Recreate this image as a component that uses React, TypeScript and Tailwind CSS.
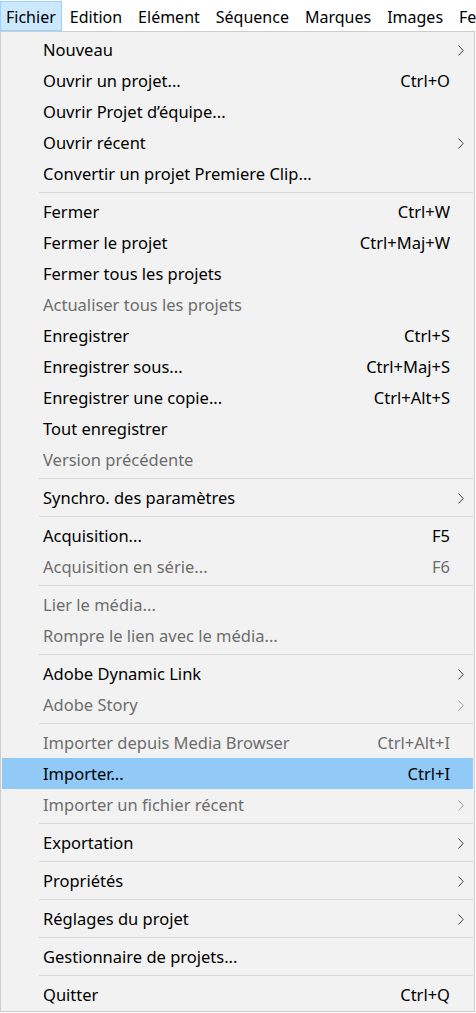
import React from "react";

type Item =
  | { sep: true }
  | { label: string; shortcut?: string; sub?: boolean; disabled?: boolean; active?: boolean };

const MENUS = ["Fichier", "Edition", "Elément", "Séquence", "Marques", "Images", "Fenêtre"];

const ITEMS: Item[] = [
  { label: "Nouveau", sub: true },
  { label: "Ouvrir un projet...", shortcut: "Ctrl+O" },
  { label: "Ouvrir Projet d’équipe..." },
  { label: "Ouvrir récent", sub: true },
  { label: "Convertir un projet Premiere Clip..." },
  { sep: true },
  { label: "Fermer", shortcut: "Ctrl+W" },
  { label: "Fermer le projet", shortcut: "Ctrl+Maj+W" },
  { label: "Fermer tous les projets" },
  { label: "Actualiser tous les projets", disabled: true },
  { label: "Enregistrer", shortcut: "Ctrl+S" },
  { label: "Enregistrer sous...", shortcut: "Ctrl+Maj+S" },
  { label: "Enregistrer une copie...", shortcut: "Ctrl+Alt+S" },
  { label: "Tout enregistrer" },
  { label: "Version précédente", disabled: true },
  { sep: true },
  { label: "Synchro. des paramètres", sub: true },
  { sep: true },
  { label: "Acquisition...", shortcut: "F5" },
  { label: "Acquisition en série...", shortcut: "F6", disabled: true },
  { sep: true },
  { label: "Lier le média...", disabled: true },
  { label: "Rompre le lien avec le média...", disabled: true },
  { sep: true },
  { label: "Adobe Dynamic Link", sub: true },
  { label: "Adobe Story", sub: true, disabled: true },
  { sep: true },
  { label: "Importer depuis Media Browser", shortcut: "Ctrl+Alt+I", disabled: true },
  { label: "Importer...", shortcut: "Ctrl+I", active: true },
  { label: "Importer un fichier récent", sub: true, disabled: true },
  { sep: true },
  { label: "Exportation", sub: true },
  { sep: true },
  { label: "Propriétés", sub: true },
  { sep: true },
  { label: "Réglages du projet", sub: true },
  { sep: true },
  { label: "Gestionnaire de projets..." },
  { sep: true },
  { label: "Quitter", shortcut: "Ctrl+Q" },
];

function Chevron({ muted }: { muted?: boolean }) {
  return (
    <svg width="6" height="11" viewBox="0 0 6 11" className={muted ? "text-[#a0a0a0]" : "text-[#404040]"}>
      <path d="M0.5 0.5 L5.2 5.5 L0.5 10.5" fill="none" stroke="currentColor" strokeWidth="1" />
    </svg>
  );
}

export default function App() {
  return (
    <div
      className="w-[476px] h-[1013px] overflow-hidden bg-white text-black"
      style={{ fontFamily: '"Noto Sans", "Open Sans", sans-serif' }}
    >
      {/* Menu bar */}
      <div className="flex h-[31px] items-stretch whitespace-nowrap text-[16px] pt-px">
        {MENUS.map((m, i) => (
          <div
            key={m}
            className={
              i === 0
                ? "flex items-center pt-[2px] px-[5px] bg-[#cce8ff] border border-[#99d1ff]"
                : "flex items-center pt-[2px] px-[7px] border border-transparent"
            }
          >
            {m}
          </div>
        ))}
      </div>

      {/* Dropdown */}
      <div className="w-[475px] h-[981px] bg-[#f2f2f2] border border-[#cccccc] pt-[2px] pl-px pr-px">
        {ITEMS.map((it, idx) =>
          "sep" in it ? (
            <div key={idx} className="h-[7px] flex items-center pl-[37px]">
              <div className="h-px w-full bg-[#d7d7d7]" />
            </div>
          ) : (
            <div
              key={idx}
              className={`h-[31px] flex items-center pt-px pl-[41px] pr-[9px] text-[16.5px] whitespace-nowrap ${
                it.active ? "bg-[#91c9f7]" : ""
              } ${it.disabled ? "text-[#6d6d6d]" : "text-black"}`}
            >
              <span className="flex-1">{it.label}</span>
              {it.shortcut && <span className="mr-[14px]">{it.shortcut}</span>}
              {it.sub && (
                <span className="w-[6px] flex items-center">
                  <Chevron muted={it.disabled} />
                </span>
              )}
            </div>
          )
        )}
      </div>
    </div>
  );
}
